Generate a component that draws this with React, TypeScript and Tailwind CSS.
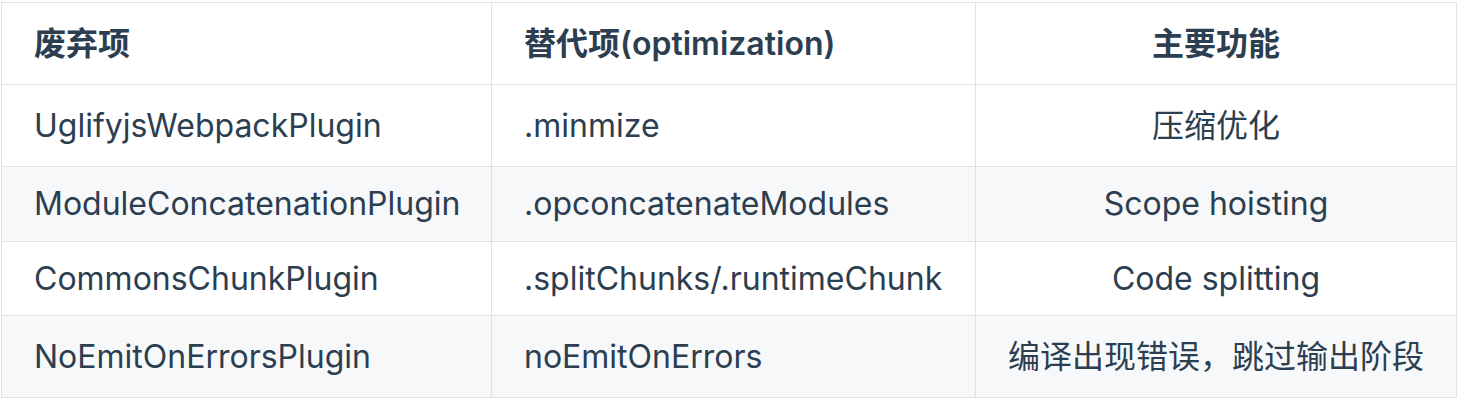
import React from "react";

interface Row {
  old: string;
  replacement: string;
  feature: string;
  height: string;
}

const rows: Row[] = [
  { old: "UglifyjsWebpackPlugin", replacement: ".minmize", feature: "压缩优化", height: "h-[82px]" },
  { old: "ModuleConcatenationPlugin", replacement: ".opconcatenateModules", feature: "Scope hoisting", height: "h-[75px]" },
  { old: "CommonsChunkPlugin", replacement: ".splitChunks/.runtimeChunk", feature: "Code splitting", height: "h-[74px]" },
  { old: "NoEmitOnErrorsPlugin", replacement: "noEmitOnErrors", feature: "编译出现错误，跳过输出阶段", height: "h-[82px]" },
];

const font = "font-['Inter','Noto_Sans_CJK_SC',sans-serif]";

const App: React.FC = () => {
  return (
    <div className={`w-[1460px] h-[398px] bg-white pt-[2px] pl-[1px] overflow-hidden ${font} text-[32px] text-[#2c3e50]`}>
      <div className="w-[1456px] border-t border-l border-[#dfe2e5]">
        <div className="flex h-[82px] border-b border-[#dfe2e5] font-semibold">
          <div className="w-[490px] flex items-center pl-[32px] border-r border-[#dfe2e5]">废弃项</div>
          <div className="w-[484px] flex items-center pl-[32px] border-r border-[#dfe2e5]">替代项(optimization)</div>
          <div className="w-[481px] flex items-center justify-center border-r border-[#dfe2e5]">主要功能</div>
        </div>
        {rows.map((row, i) => (
          <div
            key={row.old}
            className={`flex ${row.height} border-b border-[#dfe2e5] ${i % 2 === 1 ? "bg-[#f6f8fa]" : "bg-white"}`}
          >
            <div className="w-[490px] flex items-center pl-[32px] border-r border-[#dfe2e5]">{row.old}</div>
            <div className="w-[484px] flex items-center pl-[32px] border-r border-[#dfe2e5]">{row.replacement}</div>
            <div className="w-[481px] flex items-center justify-center border-r border-[#dfe2e5]">{row.feature}</div>
          </div>
        ))}
      </div>
    </div>
  );
};

export default App;
